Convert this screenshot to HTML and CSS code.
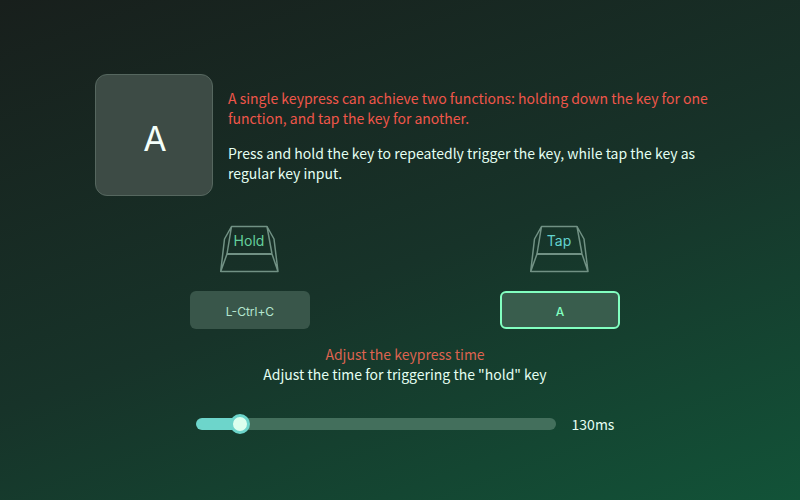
FILE: index.html
```html
<!DOCTYPE html>
<html lang="en">
<head>
<meta charset="utf-8">
<meta name="viewport" content="width=device-width, initial-scale=1">
<title>Hold and tap key settings</title>
<link rel="stylesheet" href="styles.css">
</head>
<body>
<main class="panel">
  <section class="intro">
    <div class="key-preview">A</div>
    <div class="intro-text">
      <p class="accent">A single keypress can achieve two functions: holding down the key for one function, and tap the key for another.</p>
      <p>Press and hold the key to repeatedly trigger the key, while tap the key as regular key input.</p>
    </div>
  </section>

  <section class="bindings">
    <div class="binding">
      <div class="keycap">
        <svg class="keycap-shape" viewBox="0 0 60 48" aria-hidden="true">
          <path d="M11.500 1.500H47L54 14L58 46.500H.7L4.500 14L11.500 1.500L7 29L.7 46.500M47 1.500L52 29L58 46.500"/>
          <path class="edge" d="M7 29H52"/>
        </svg>
        <label class="keycap-label hold" for="hold-key">Hold</label>
      </div>
      <button class="key-button" id="hold-key" type="button">L-Ctrl+C</button>
    </div>
    <div class="binding">
      <div class="keycap">
        <svg class="keycap-shape" viewBox="0 0 60 48" aria-hidden="true">
          <path d="M11.500 1.500H47L54 14L58 46.500H.7L4.500 14L11.500 1.500L7 29L.7 46.500M47 1.500L52 29L58 46.500"/>
          <path class="edge" d="M7 29H52"/>
        </svg>
        <label class="keycap-label tap" for="tap-key">Tap</label>
      </div>
      <button class="key-button selected" id="tap-key" type="button">A</button>
    </div>
  </section>

  <section class="timing">
    <label class="accent-soft" for="hold-time">Adjust the keypress time</label>
    <p>Adjust the time for triggering the "hold" key</p>
    <div class="slider-row">
      <input class="slider" id="hold-time" type="range" min="100" max="400" value="130" style="--fill: 12%">
      <output class="slider-value" for="hold-time">130ms</output>
    </div>
  </section>
</main>
</body>
</html>
```
FILE: styles.css
```css
* {
  box-sizing: border-box;
}

body {
  margin: 0;
  min-height: 100vh;
  padding: 74px 85px 24px 95px;
  background: linear-gradient(160deg, #181f1c 0%, #173329 52%, #125338 100%);
  color: #e4fff2;
  font: 14px/20px "Noto Sans CJK SC", sans-serif;
}

p {
  margin: 0;
}

.panel {
  max-width: 620px;
  margin: 0 auto;
}

.intro {
  display: flex;
  align-items: center;
  gap: 15px;
}

.key-preview {
  display: flex;
  flex: none;
  align-items: center;
  justify-content: center;
  width: 118px;
  height: 122px;
  padding: 8px 0 0 2px;
  border: 1px solid #56675f;
  border-radius: 12px;
  background: #3d4b45;
  color: #f4fffa;
  font: 34px/40px Inter, sans-serif;
}

.intro-text {
  display: grid;
  gap: 15px;
}

.accent {
  color: #f0564a;
}

.accent-soft {
  color: #dc6350;
}

.bindings {
  display: grid;
  grid-template-columns: 1fr 1fr;
  margin-top: 29px;
}

.binding {
  display: flex;
  flex-direction: column;
  align-items: center;
  gap: 18px;
}

.keycap {
  display: grid;
  justify-items: center;
}

.keycap-shape,
.keycap-label {
  grid-area: 1 / 1;
}

.keycap-shape {
  width: 60px;
  height: 48px;
  fill: none;
  stroke: #719184;
  stroke-width: 1.5;
  stroke-linejoin: round;
}

.edge {
  stroke-width: 2;
}

.keycap-label {
  padding: 6px 2px 0 0;
  font: 14px/20px Inter, sans-serif;
}

.hold {
  color: #65cf9c;
}

.tap {
  color: #62d2ce;
}

.key-button {
  width: 120px;
  height: 38px;
  padding: 4px 0 0;
  border: 0;
  border-radius: 6px;
  background: #39564a;
  color: #b5e6d0;
  font: 12px/18px Inter, sans-serif;
}

.key-button.selected {
  border: 2px solid #82ffc0;
  background: #395d4d;
  color: #82ffc0;
  font-weight: 500;
}

.timing {
  display: flex;
  flex-direction: column;
  align-items: center;
  margin-top: 15px;
}

.slider-row {
  display: flex;
  align-items: center;
  gap: 16px;
  margin-top: 30px;
}

.slider {
  width: 360px;
  height: 20px;
  margin: 0;
  appearance: none;
  background: transparent;
}

.slider::-webkit-slider-runnable-track {
  height: 12px;
  border-radius: 6px;
  background: linear-gradient(to right, #6dd5cb var(--fill), #436f5c var(--fill));
}

.slider::-webkit-slider-thumb {
  width: 20px;
  height: 20px;
  margin-top: -4px;
  appearance: none;
  border: 3px solid #6dd5cb;
  border-radius: 50%;
  background: #dcffee;
}
```
